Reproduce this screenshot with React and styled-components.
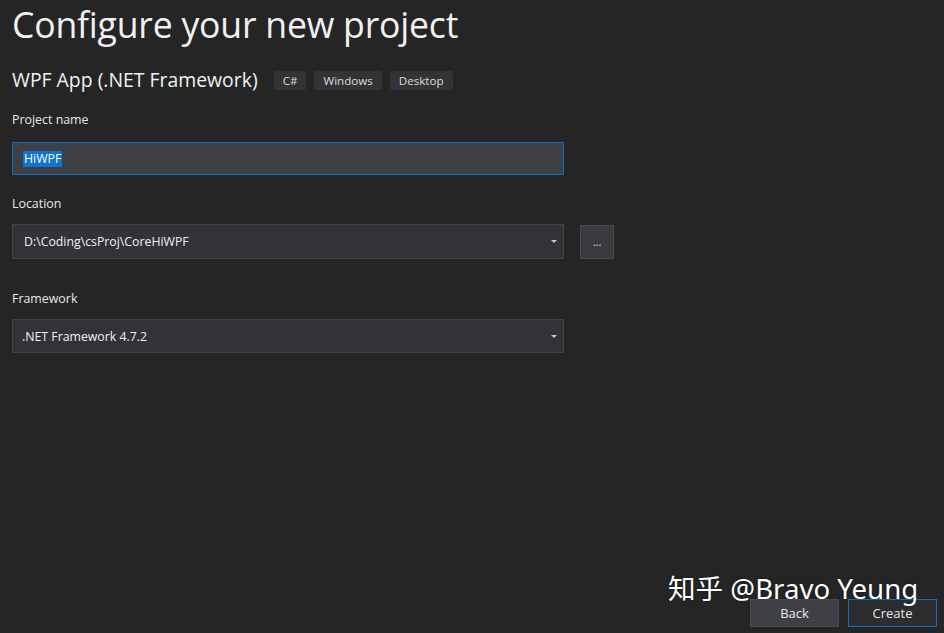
import React from 'react';
import styled, { createGlobalStyle } from 'styled-components';

const Global = createGlobalStyle`
  html, body {
    margin: 0;
    padding: 0;
    background: #252526;
  }
  body {
    font-family: "Open Sans", "Noto Sans", sans-serif;
    color: #f1f1f1;
  }
`;

const Page = styled.div`
  position: relative;
  width: 944px;
  height: 633px;
  overflow: hidden;
  background: #252526;
  display: flex;
  flex-direction: column;
  padding: 0 12px;
  box-sizing: border-box;
`;

const Title = styled.h1`
  margin: 0;
  padding-top: 1px;
  font-size: 35.6px;
  font-weight: 400;
  line-height: 46px;
  color: #f1f1f1;
  letter-spacing: -0.2px;
`;

const TemplateRow = styled.div`
  display: flex;
  align-items: center;
  margin-top: 20px;
  height: 26px;
`;

const TemplateName = styled.div`
  font-size: 19.4px;
  line-height: 26px;
  color: #f1f1f1;
  margin-right: 16px;
`;

const Tag = styled.span`
  display: inline-flex;
  align-items: center;
  height: 19px;
  padding: 0 9px;
  margin-right: 8px;
  background: #333337;
  border-radius: 2px;
  font-size: 11.6px;
  color: #dcdcdc;
`;

const Label = styled.div`
  font-size: 12.4px;
  line-height: 18px;
  color: #e8e8e8;
  margin-top: ${(p) => p.top}px;
  margin-bottom: ${(p) => p.bottom}px;
`;

const Field = styled.div`
  width: 552px;
  height: ${(p) => p.h}px;
  box-sizing: border-box;
  display: flex;
  align-items: center;
  padding-left: ${(p) => p.pad}px;
  padding-right: 6px;
  font-size: 12.3px;
  color: #f1f1f1;
  background: ${(p) => (p.focus ? '#3f3f46' : '#333337')};
  border: 1px solid ${(p) => (p.focus ? '#0e70c0' : '#434346')};
`;

const Selected = styled.span`
  background: #0f73d2;
  color: #fff;
  padding: 0 1px;
  line-height: 16px;
`;

const Value = styled.span`
  flex: 1;
`;

const Caret = styled.span`
  width: 0;
  height: 0;
  border-left: 3px solid transparent;
  border-right: 3px solid transparent;
  border-top: 3px solid #c8c8c8;
`;

const Row = styled.div`
  display: flex;
  align-items: center;
  gap: 16px;
`;

const Browse = styled.div`
  width: 34px;
  height: 34px;
  box-sizing: border-box;
  background: #3a3a3f;
  border: 1px solid #4a4a50;
  display: flex;
  align-items: center;
  justify-content: center;
  font-size: 11px;
  color: #e0e0e0;
`;

const Footer = styled.div`
  margin-top: auto;
  margin-bottom: 6px;
  display: flex;
  justify-content: flex-end;
  gap: 9px;
  margin-right: -5px;
`;

const Button = styled.div`
  width: 89px;
  height: 28px;
  box-sizing: border-box;
  display: flex;
  align-items: center;
  justify-content: center;
  font-size: 13px;
  color: #e8e8e8;
  background: ${(p) => (p.primary ? '#2d2d30' : '#3f3f46')};
  border: 1px solid ${(p) => (p.primary ? '#0e70c0' : '#4a4a50')};
`;

const Watermark = styled.div`
  position: absolute;
  left: 668px;
  top: 568px;
  font-family: "Noto Sans", "Noto Sans CJK SC", sans-serif;
  font-size: 27.6px;
  line-height: 40px;
  color: #ffffff;
  white-space: nowrap;
  text-shadow: 0 0 2px rgba(0, 0, 0, 0.6);
`;

export default function App() {
  return (
    <>
      <Global />
      <Page>
        <Title>Configure your new project</Title>
        <TemplateRow>
          <TemplateName>WPF App (.NET Framework)</TemplateName>
          <Tag>C#</Tag>
          <Tag>Windows</Tag>
          <Tag>Desktop</Tag>
        </TemplateRow>

        <Label top={18} bottom={13}>Project name</Label>
        <Field h={33} pad={10} focus>
          <Selected>HiWPF</Selected>
        </Field>

        <Label top={20} bottom={11}>Location</Label>
        <Row>
          <Field h={35} pad={11}>
            <Value>D:\Coding\csProj\CoreHiWPF</Value>
            <Caret />
          </Field>
          <Browse>...</Browse>
        </Row>

        <Label top={31} bottom={11}>Framework</Label>
        <Field h={34} pad={9}>
          <Value>.NET Framework 4.7.2</Value>
          <Caret />
        </Field>

        <Footer>
          <Button>Back</Button>
          <Button primary>Create</Button>
        </Footer>
        <Watermark>知乎 @Bravo Yeung</Watermark>
      </Page>
    </>
  );
}
